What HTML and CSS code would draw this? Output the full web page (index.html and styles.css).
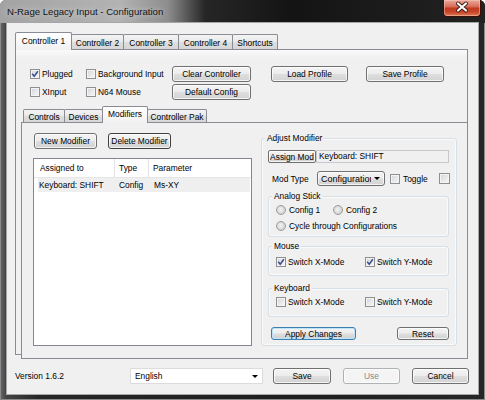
FILE: index.html
```html
<!DOCTYPE html>
<html>
<head>
<meta charset="utf-8">
<link rel="stylesheet" href="styles.css">
</head>
<body>
<div class="window">
  <div class="titlebar">
    <span class="title">N-Rage Legacy Input - Configuration</span>
    <div class="close">
      <svg width="38" height="17" viewBox="0 0 38 17">
        <path d="M15 4.5 L23 11.5 M23 4.5 L15 11.5" stroke="#3a1a14" stroke-width="4" stroke-linecap="round"/>
        <path d="M15 4.5 L23 11.5 M23 4.5 L15 11.5" stroke="#ffffff" stroke-width="2.2" stroke-linecap="round"/>
      </svg>
    </div>
  </div>
  <div class="client">
    <div class="otabs">
      <div class="strip ostrip">
        <div class="tab sel w57">Controller 1</div>
        <div class="tab w53">Controller 2</div>
        <div class="tab w56">Controller 3</div>
        <div class="tab w55">Controller 4</div>
        <div class="tab w46">Shortcuts</div>
      </div>
      <div class="opanel">
        <div class="toprow">
          <div class="checks">
            <div class="cb"><span class="box"><svg class="tick" width="8" height="8" viewBox="0 0 8 8"><path d="M1.2 3.8 L3.2 6.2 L6.9 1.2" fill="none" stroke="#3b4d8c" stroke-width="1.5"/></svg></span>Plugged</div>
            <div class="cb"><span class="box"></span>Background Input</div>
            <div class="cb"><span class="box"></span>XInput</div>
            <div class="cb"><span class="box"></span>N64 Mouse</div>
          </div>
          <div class="btncol">
            <div class="btn w79">Clear Controller</div>
            <div class="btn w79">Default Config</div>
          </div>
          <div class="btn w77 ml20">Load Profile</div>
          <div class="btn w78 ml18">Save Profile</div>
        </div>
        <div class="itabs">
          <div class="strip istrip">
            <div class="tab w42 ml2">Controls</div>
            <div class="tab w39">Devices</div>
            <div class="tab sel w46">Modifiers</div>
            <div class="tab w60">Controller Pak</div>
          </div>
          <div class="ipanel">
            <div class="leftcol">
              <div class="btnrow">
                <div class="btn w63 ml1">New Modifier</div>
                <div class="btn w63 ml11 focus">Delete Modifier</div>
              </div>
              <div class="list">
                <div class="lhead">
                  <div class="c1">Assigned to</div>
                  <div class="c2">Type</div>
                  <div class="c3">Parameter</div>
                </div>
                <div class="lrow">
                  <div class="c1">Keyboard: SHIFT</div>
                  <div class="c2">Config</div>
                  <div class="c3">Ms-XY</div>
                </div>
              </div>
            </div>
            <div class="group">
              <div class="legend">Adjust Modifier</div>
              <div class="rowa">
                <div class="btn assign">Assign Mod</div>
                <div class="textbox">Keyboard: SHIFT</div>
              </div>
              <div class="rowb">
                <div class="modlabel">Mod Type</div>
                <div class="combo"><span class="ctext">Configuration</span><span class="arrow"></span></div>
                <div class="cb toggle"><span class="box"></span>Toggle</div>
                <span class="box extra"></span>
              </div>
              <div class="sub analog">
                <div class="legend">Analog Stick</div>
                <div class="radrow r1">
                  <div class="rb w57"><span class="radio"></span>Config 1</div>
                  <div class="rb"><span class="radio"></span>Config 2</div>
                </div>
                <div class="radrow r2">
                  <div class="rb"><span class="radio"></span>Cycle through Configurations</div>
                </div>
              </div>
              <div class="sub mouse">
                <div class="legend">Mouse</div>
                <div class="cbrow">
                  <div class="cb w89"><span class="box"><svg class="tick" width="8" height="8" viewBox="0 0 8 8"><path d="M1.2 3.8 L3.2 6.2 L6.9 1.2" fill="none" stroke="#3b4d8c" stroke-width="1.5"/></svg></span>Switch X-Mode</div>
                  <div class="cb"><span class="box"><svg class="tick" width="8" height="8" viewBox="0 0 8 8"><path d="M1.2 3.8 L3.2 6.2 L6.9 1.2" fill="none" stroke="#3b4d8c" stroke-width="1.5"/></svg></span>Switch Y-Mode</div>
                </div>
              </div>
              <div class="sub keyboard">
                <div class="legend">Keyboard</div>
                <div class="cbrow">
                  <div class="cb w89"><span class="box"></span>Switch X-Mode</div>
                  <div class="cb"><span class="box"></span>Switch Y-Mode</div>
                </div>
              </div>
              <div class="applyrow">
                <div class="btn apply">Apply Changes</div>
                <div class="btn reset">Reset</div>
              </div>
            </div>
          </div>
        </div>
      </div>
    </div>
    <div class="footer">
      <div class="version">Version 1.6.2</div>
      <div class="langcombo"><span>English</span><span class="arrow"></span></div>
      <div class="btn w58 ml10">Save</div>
      <div class="btn w57 ml12 disabled">Use</div>
      <div class="btn w57 ml12">Cancel</div>
    </div>
  </div>
</div>
</body>
</html>
```

FILE: styles.css
```css
* { box-sizing: border-box; }
html, body { margin: 0; padding: 0; }
body {
  width: 485px; height: 400px; overflow: hidden;
  font-family: "Liberation Sans", Arial, sans-serif;
  font-size: 8.4px; color: #000; background: #fff;
}
.window {
  width: 485px; height: 400px;
  display: flex; flex-direction: column;
  padding: 0 7px 6px 7px;
  border-radius: 6px 6px 0 0;
  background: linear-gradient(to right, #6a6a6a 0, #444 6px, #262626 40px, #1e1e1e 60%, #262626 100%);
  box-shadow: inset 0 0 0 1px #8a8a8a;
}
.titlebar {
  height: 23px; flex: none;
  margin: 0 -7px; padding: 0 4px 0 7px;
  display: flex; justify-content: space-between; align-items: flex-start;
  border-radius: 6px 6px 0 0;
  background: linear-gradient(to right, #a3a3a3 0, #b3b3b3 120px, #8d8d8d 168px, #262626 205px, #141414 60%, #222 100%);
}
.title {
  margin-top: 5px; line-height: 14px;
  font-family: "Liberation Sans", Arial, sans-serif;
  font-size: 9.6px; color: #141414;
  text-shadow: 0 0 6px rgba(255,255,255,0.7);
}
.close {
  width: 38px; height: 17px;
  border: 1px solid #3b0e08; border-top: none;
  border-radius: 0 0 4px 4px;
  background: linear-gradient(#e9a898 0%, #d8705c 40%, #c23a1f 52%, #c8452a 75%, #e07a56 100%);
  box-shadow: inset 0 0 0 1px rgba(255,210,200,0.45);
}
.close svg { display: block; margin: -1px 0 0 -1px; }
.client {
  flex: 1;
  background: #f0f0f0;
  box-shadow: 0 0 0 1px #a6a6a6;
  padding: 9px 0 0 8px;
  display: flex; flex-direction: column;
}

/* tabs */
.otabs { width: 453px; display: flex; flex-direction: column; }
.strip { display: flex; align-items: flex-end; z-index: 1; }
.ostrip { height: 18px; }
.istrip { height: 17px; }
.tab {
  height: 15px; margin-bottom: 1px; margin-left: -1px;
  border: 1px solid #898c95; border-bottom: none;
  border-radius: 2px 2px 0 0;
  background: linear-gradient(#f4f4f4 0%, #e9e9e9 50%, #dedede 52%, #d6d6d6 100%);
  display: flex; align-items: center; justify-content: center;
  white-space: nowrap; padding-top: 1px;
}
.istrip .tab { height: 13px; }
.tab.sel {
  height: 18px; margin-bottom: 0;
  background: linear-gradient(#ffffff, #f7f7f7 60%, #f0f0f0);
  padding-top: 0; padding-bottom: 2px;
}
.istrip .tab.sel { height: 17px; padding-bottom: 3px; }
.ostrip .tab.sel { margin-left: 0; }
.opanel {
  height: 306px; margin-top: -1px;
  border: 1px solid #898c95;
  background: linear-gradient(#fafafa, #f0f0f0 8px);
  padding: 16px 0 0 5px;
}
.toprow { display: flex; align-items: flex-start; margin-left: 9px; height: 34px; }
.checks {
  display: grid; grid-template-columns: 56px 86px;
  grid-template-rows: 16px 16px; row-gap: 2px;
}
.cb { display: flex; align-items: center; gap: 2px; white-space: nowrap; }
.box {
  width: 10px; height: 10px; flex: none;
  border: 1px solid #8e8f8f;
  background: linear-gradient(135deg, #d2d5da, #f8f8f8);
  box-shadow: inset 0 0 0 1px #f4f4f4;
  display: flex; align-items: center; justify-content: center;
}
.tick { display: block; }
.btncol { display: flex; flex-direction: column; gap: 2px; }
.btn {
  height: 16px;
  border: 1px solid #707070; border-radius: 3px;
  background: linear-gradient(#f4f4f4 0%, #ececec 48%, #dedede 52%, #d2d2d2 100%);
  box-shadow: inset 0 0 0 1px rgba(255,255,255,0.75);
  display: flex; align-items: center; justify-content: center;
  white-space: nowrap; flex: none;
}
.btn.focus { border-color: #404040; }
.btn.disabled { border-color: #adb2b5; background: #f4f4f4; color: #8a8a8a; }
.w39 { width: 39px; } .w42 { width: 42px; } .w46 { width: 46px; }
.w53 { width: 53px; } .w55 { width: 55px; } .w56 { width: 56px; }
.w57 { width: 57px; } .w58 { width: 58px; } .w60 { width: 60px; }
.w63 { width: 63px; } .w77 { width: 77px; } .w78 { width: 78px; }
.w79 { width: 79px; } .w89 { width: 89px; }
.ml1 { margin-left: 1px; } .ml2 { margin-left: 2px; } .ml10 { margin-left: 10px; }
.ml11 { margin-left: 11px; } .ml12 { margin-left: 12px; }
.ml18 { margin-left: 18px; } .ml20 { margin-left: 20px; }

.itabs { margin-top: 6px; display: flex; flex-direction: column; }
.ipanel {
  height: 237px; width: 447px; margin-top: -1px;
  border: 1px solid #898c95;
  background: #f0f0f0;
  padding: 10px 0 0 11px;
  display: flex; align-items: flex-start;
}
.leftcol { width: 219px; display: flex; flex-direction: column; }
.btnrow { display: flex; }
.list {
  margin-top: 9px; height: 188px; width: 219px;
  border: 1px solid #828790;
  background: #fff;
}
.lhead, .lrow { display: flex; align-items: center; white-space: nowrap; }
.lhead { height: 19px; border-bottom: 1px solid #e6e6e6; }
.lhead .c1, .lhead .c2 { border-right: 1px solid #e3e3e3; height: 19px; line-height: 19px; }
.lhead .c1, .lrow .c1 { width: 81px; padding-left: 6px; }
.lhead .c2, .lrow .c2 { width: 34px; padding-left: 4px; }
.lhead .c3, .lrow .c3 { padding-left: 4px; }
.lrow { height: 14px; margin: 0 1px 0 4px; background: #efefef; }
.lrow .c1 { width: 77px; padding-left: 1px; }
.lrow .c2 { width: 35px; padding-left: 4px; }

.group {
  width: 196px; margin: 5px 0 0 9px;
  border: 1px solid #d5dfe5; border-radius: 3px;
  box-shadow: inset 0 0 0 1px #fafafa;
  padding-bottom: 5px;
}
.legend {
  width: fit-content; margin: -6px 0 0 3px; padding: 0 2px;
  line-height: 10px; height: 10px; background: #f0f0f0;
  white-space: nowrap;
}
.rowa { display: flex; margin: 7px 0 0 6px; }
.btn.assign { width: 48px; height: 13px; border-radius: 2px; }
.textbox {
  width: 133px; height: 13px;
  border: 1px solid #c6c8cc;
  background: #f0f0f0;
  padding-left: 2px; line-height: 10px;
  white-space: nowrap;
}
.rowb { display: flex; align-items: center; margin: 8px 0 0 10px; height: 15px; }
.modlabel { width: 45px; }
.combo {
  width: 68px; height: 15px;
  border: 1px solid #707070; border-radius: 3px;
  background: linear-gradient(#f4f4f4 0%, #ececec 48%, #dedede 52%, #d2d2d2 100%);
  box-shadow: inset 0 0 0 1px rgba(255,255,255,0.75);
  display: flex; align-items: center; padding: 0 4px 0 3px;
}
.ctext { width: 50px; overflow: hidden; white-space: nowrap; font-size: 9px; }
.arrow {
  width: 0; height: 0; margin-left: auto;
  border-left: 3px solid transparent; border-right: 3px solid transparent;
  border-top: 3px solid #000;
}
.toggle { margin-left: 5px; }
.toggle .box { margin-right: 1px; }
.box.extra { margin-left: 11px; width: 11px; height: 11px; }
.sub {
  width: 181px; margin: 10px 0 0 6px;
  border: 1px solid #d5dfe5; border-radius: 3px;
  box-shadow: inset 0 0 0 1px #fafafa;
}
.sub .legend { margin-left: 3px; }
.analog { padding-bottom: 4px; }
.radrow { display: flex; align-items: center; height: 12px; padding-left: 7px; }
.radrow.r1 { margin-top: 3px; }
.radrow.r2 { margin-top: 4px; }
.rb { display: flex; align-items: center; gap: 3px; white-space: nowrap; }
.radio {
  width: 10px; height: 10px; border-radius: 50%; flex: none;
  border: 1px solid #9a9a9a;
  background: radial-gradient(circle at 45% 45%, #f4f4f4 0, #dedede 45%, #c9c9c9 100%);
}
.mouse { margin-top: 9px; padding-bottom: 8px; }
.keyboard { margin-top: 12px; padding-bottom: 9px; }
.cbrow { display: flex; align-items: center; height: 10px; padding-left: 7px; }
.mouse .cbrow { margin-top: 6px; }
.keyboard .cbrow { margin-top: 4px; }
.applyrow { display: flex; margin: 10px 0 0 9px; }
.btn.apply {
  width: 85px; height: 13px; border-color: #3c7fb1;
  box-shadow: inset 0 0 0 1px #c0e2f7;
}
.btn.reset { width: 52px; height: 13px; margin-left: 41px; }

.footer { display: flex; align-items: center; margin-top: 12px; height: 17px; }
.version { width: 115px; }
.langcombo {
  width: 133px; height: 16px;
  border: 1px solid #dcdcdc;
  background: #fff;
  display: flex; align-items: flex-start; padding: 2px 4px 0 4px;
}
.langcombo .arrow { margin-top: 4px; }
.footer .btn { height: 16px; }
.footer .btn.w58 { margin-top: 1px; }
```
